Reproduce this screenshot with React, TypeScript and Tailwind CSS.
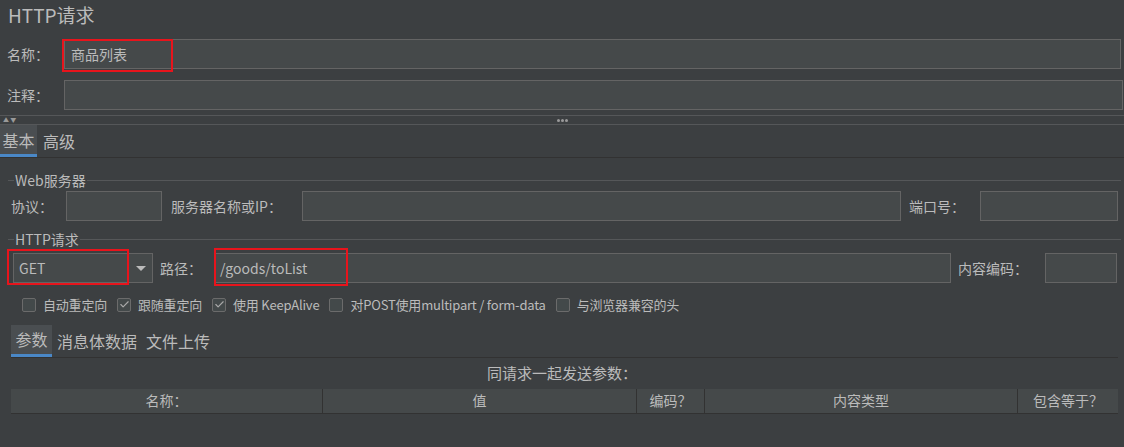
import { Check } from 'lucide-react'

const font = { fontFamily: '"Noto Sans CJK SC", "Open Sans", sans-serif' }

const Field = ({ className = '', children }: { className?: string; children?: React.ReactNode }) => (
  <div className={`h-[30px] bg-[#45494a] border border-[#646464] flex items-center ${className}`}>{children}</div>
)

const Box = ({ checked, label }: { checked?: boolean; label: string }) => (
  <div className="flex items-center gap-[7px]">
    <div className="w-[14px] h-[14px] rounded-[2px] border border-[#6b6b6b] bg-[#43494a] flex items-center justify-center">
      {checked && <Check size={11} strokeWidth={2.5} className="text-[#a9a9a9]" />}
    </div>
    <span className="text-[13px] text-[#bbbbbb] tracking-[-0.2px]">{label}</span>
  </div>
)

const GroupTitle = ({ title }: { title: string }) => (
  <div className="flex items-center pl-[8px] pr-[3px] h-[16px]">
    <div className="w-[6px] h-px bg-[#555759]" />
    <span className="text-[14px] text-[#bbbbbb] px-[1px] leading-none">{title}</span>
    <div className="flex-1 h-px bg-[#555759]" />
  </div>
)

export default function App() {
  const cols = [
    { name: '名称：', w: 'w-[312px]' },
    { name: '值', w: 'w-[314px]' },
    { name: '编码？', w: 'w-[68px]' },
    { name: '内容类型', w: 'w-[313px]' },
    { name: '包含等于？', w: 'flex-1' },
  ]

  return (
    <div className="w-[1124px] h-[447px] bg-[#3c3f41] text-[#bbbbbb] overflow-hidden" style={font}>
      {/* title */}
      <div className="h-[34px] pl-[8px] pt-[2px] text-[19px] leading-[26px]">HTTP请求</div>

      {/* name / comment */}
      <div className="mt-[5px] flex items-center h-[30px]">
        <span className="w-[64px] pl-[7px] text-[14px]">名称：</span>
        <Field className="flex-1 mr-[3px] relative">
          <span className="pl-[6px] text-[14px] text-[#bbbbbb]">商品列表</span>
          <div className="absolute left-[-3px] top-[-1px] w-[111px] h-[33px] border-2 border-[#e8141c]" />
        </Field>
      </div>
      <div className="mt-[11px] flex items-center h-[30px]">
        <span className="w-[64px] pl-[7px] text-[14px]">注释：</span>
        <Field className="flex-1 mr-[1px]" />
      </div>

      {/* splitter */}
      <div className="mt-[5px] border-t border-[#555759] h-[10px] border-b relative flex items-center">
        <span className="absolute left-[3px] top-[0px] text-[6px] leading-[8px] text-[#9a9a9a]">▲ ▼</span>
        <div className="mx-auto flex gap-[1px]">
          <div className="w-[3px] h-[3px] rounded-full bg-[#9a9a9a]" />
          <div className="w-[3px] h-[3px] rounded-full bg-[#9a9a9a]" />
          <div className="w-[3px] h-[3px] rounded-full bg-[#9a9a9a]" />
        </div>
      </div>

      {/* main tabs */}
      <div className="flex h-[33px] border-b border-[#323232] items-stretch">
        <div className="w-[37px] bg-[#4a4e51] border-b-[3px] border-[#4a88c7] flex items-center justify-center text-[16px] text-[#bbbbbb]">基本</div>
        <div className="px-[6px] flex items-center text-[16px]">高级</div>
      </div>

      {/* Web server group */}
      <div className="mt-[14px]">
        <GroupTitle title="Web服务器" />
        <div className="mt-[3px] flex items-center h-[30px] pl-[11px] text-[14px]">
          <span className="w-[55px]">协议：</span>
          <Field className="w-[96px]" />
          <span className="ml-[9px] w-[131px]">服务器名称或IP：</span>
          <Field className="w-[599px]" />
          <span className="ml-[8px] w-[71px]">端口号：</span>
          <Field className="w-[138px]" />
        </div>
      </div>

      {/* HTTP group */}
      <div className="mt-[10px]">
        <GroupTitle title="HTTP请求" />
        <div className="mt-[6px] flex items-center h-[30px] pl-[13px] text-[14px]">
          <div className="relative flex h-[30px] w-[140px] bg-[#45494a] border border-[#646464]">
            <span className="flex-1 flex items-center pl-[5px] text-[14px]">GET</span>
            <div className="w-[24px] border-l border-[#646464] flex items-center justify-center">
              <div className="w-0 h-0 border-l-[5px] border-r-[5px] border-t-[5px] border-l-transparent border-r-transparent border-t-[#bbbbbb]" />
            </div>
            <div className="absolute left-[-7px] top-[-5px] w-[122px] h-[36px] border-2 border-[#e8141c]" />
          </div>
          <span className="ml-[7px] w-[54px]">路径：</span>
          <Field className="w-[737px] relative">
            <span className="pl-[5px] text-[14px]">/goods/toList</span>
            <div className="absolute left-[-1px] top-[-6px] w-[134px] h-[38px] border-2 border-[#e8141c]" />
          </Field>
          <span className="ml-[7px] w-[87px]">内容编码：</span>
          <Field className="w-[72px]" />
        </div>
        <div className="mt-[12px] flex items-center pl-[22px] gap-[10px]">
          <Box label="自动重定向" />
          <Box checked label="跟随重定向" />
          <Box checked label="使用 KeepAlive" />
          <Box label="对POST使用multipart / form-data" />
          <Box label="与浏览器兼容的头" />
        </div>
      </div>

      {/* sub tabs */}
      <div className="mt-[10px] mx-[11px] mr-[6px] flex h-[33px] border-b border-[#323232] items-stretch text-[16px]">
        <div className="w-[41px] bg-[#4a4e51] border-b-[3px] border-[#4a88c7] flex items-center justify-center">参数</div>
        <div className="pl-[5px] flex items-center">消息体数据</div>
        <div className="pl-[9px] flex items-center">文件上传</div>
      </div>

      <div className="h-[31px] flex items-center justify-center text-[15px] pt-[1px]">同请求一起发送参数：</div>

      <div className="mx-[11px] mr-[6px] h-[25px] flex bg-[#45494a] border-b border-[#323232] text-[14px]">
        {cols.map((c, i) => (
          <div
            key={c.name}
            className={`${c.w} flex items-center justify-center ${i < cols.length - 1 ? 'border-r border-[#323232]' : ''}`}
          >
            {c.name}
          </div>
        ))}
      </div>
    </div>
  )
}
